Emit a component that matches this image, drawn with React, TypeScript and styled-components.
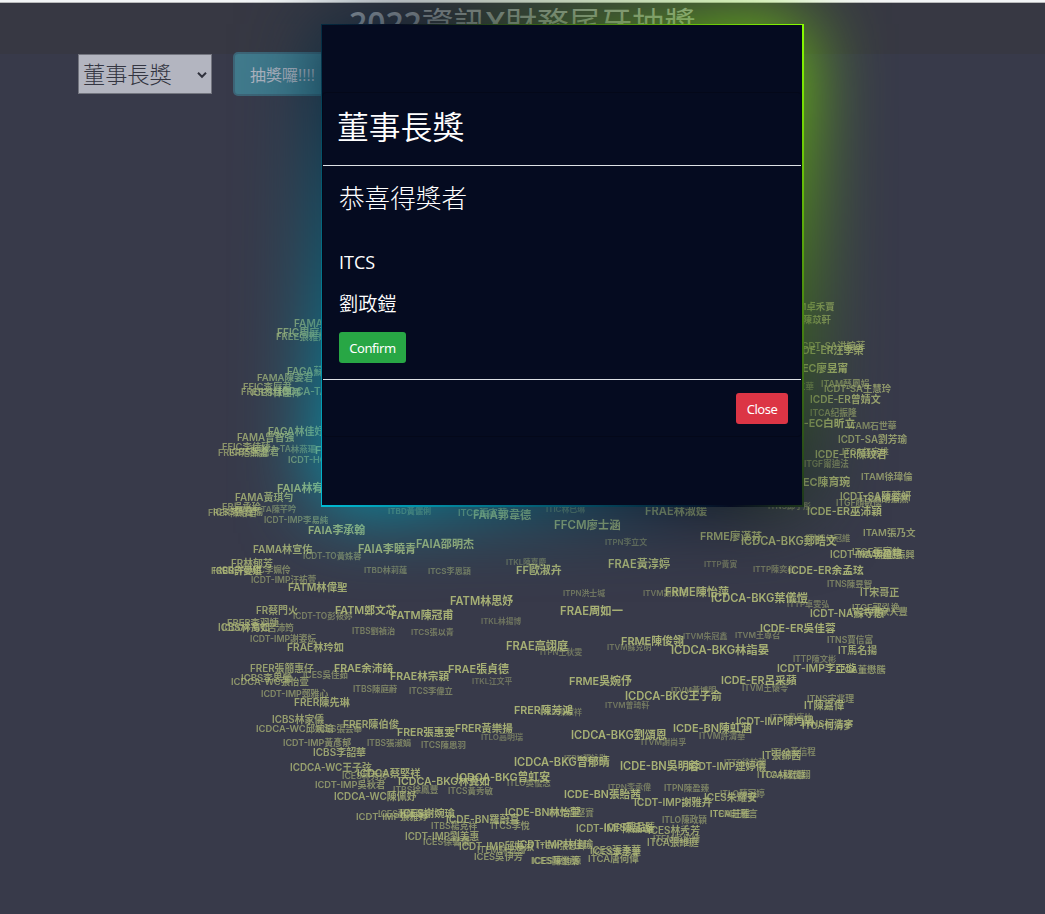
import React from "react";
import styled, { createGlobalStyle } from "styled-components";

const Global = createGlobalStyle`
  * { box-sizing: border-box; }
  body {
    margin: 0;
    background: #383a4a;
    font-family: "Open Sans", "Noto Sans CJK TC", sans-serif;
    overflow: hidden;
  }
`;

const Page = styled.div`
  position: relative;
  width: 100%;
  height: 914px;
  overflow: hidden;
  background: #383a4a;
`;

const TopEdge = styled.div`
  height: 3px;
  background: #f3f5f6;
  border-bottom: 1px solid #b9babb;
`;

const Header = styled.header`
  height: 51px;
  background: #373843;
  display: flex;
  justify-content: center;
`;

const Title = styled.h1`
  margin: 0;
  padding-top: 1px;
  height: 38px;
  line-height: 38px;
  font-size: 31.8px;
  font-weight: 600;
  color: #a0a3aa;
  white-space: nowrap;
`;

const Han = styled.span`
  font-weight: 400;
`;

const Toolbar = styled.div`
  display: flex;
  align-items: flex-start;
  gap: 21px;
  padding-left: 78px;
  height: 42px;
`;

const Select = styled.div`
  display: flex;
  align-items: center;
  justify-content: space-between;
  width: 134px;
  height: 40px;
  padding: 1px 4px 0 4px;
  border: 1px solid #73757f;
  background: #b3b5c0;
  color: #343642;
  font-size: 22.2px;
  font-weight: 300;
  line-height: 38px;
  white-space: nowrap;
`;

const DrawButton = styled.button`
  width: 130px;
  height: 44px;
  margin-top: -2px;
  padding: 0 0 0 15px;
  border: 2px solid #3d6577;
  border-radius: 5px;
  background: #417a8c;
  color: #b0b5c1;
  font: 400 16px "Open Sans", "Noto Sans CJK TC", sans-serif;
  text-align: left;
  white-space: nowrap;
`;

const Cloud = styled.div`
  position: absolute;
  inset: 0;
  font-family: Inter, "Noto Sans CJK TC", sans-serif;
  font-weight: 600;
  color: #b6c07a;
`;

const Tag = styled.span<{ $x: number; $y: number; $size: number; $alpha: number }>`
  position: absolute;
  left: ${(p) => p.$x}px;
  top: ${(p) => p.$y - 8}px;
  font-size: ${(p) => p.$size}px;
  opacity: ${(p) => p.$alpha};
  line-height: 16px;
  white-space: nowrap;
`;

const Modal = styled.div`
  position: absolute;
  left: 322px;
  top: 25px;
  width: 480px;
  height: 480px;
`;

const Glow = styled.div<{ $blur?: boolean }>`
  position: absolute;
  inset: -1px -2px -2px -1px;
  background: linear-gradient(235deg, #89ff00, #060c21, #00bcd4);
  filter: ${(p) => (p.$blur ? "blur(40px)" : "none")};
`;

const ModalFace = styled.div`
  position: relative;
  height: 100%;
  background: #050b20;
  color: #fff;
  display: flex;
  flex-direction: column;
  justify-content: center;
`;

const ModalContent = styled.section`
  height: 345px;
  margin-bottom: 1px;
  border: 1px solid #040819;
  border-radius: 4px;
  display: flex;
  flex-direction: column;
`;

const ModalHeader = styled.div`
  height: 73px;
  padding: 10px 14px 8px;
  border-bottom: 1px solid #dee2e6;
  font-size: 31.8px;
  font-weight: 350;
  line-height: 48px;
`;

const ModalBody = styled.div`
  height: 213px;
  padding: 13px 16px 0;
  display: flex;
  flex-direction: column;
  align-items: flex-start;
`;

const Congrats = styled.div`
  font-size: 25.6px;
  font-weight: 300;
  line-height: 40px;
`;

const Winner = styled.div<{ $gap: number }>`
  margin-top: ${(p) => p.$gap}px;
  font-size: 19.2px;
  font-weight: 350;
  line-height: 28px;
`;

const Dept = styled(Winner)`
  font-size: 18px;
  font-weight: 400;
`;

const Button = styled.button<{ $tone: string; $width: number }>`
  width: ${(p) => p.$width}px;
  height: 31px;
  padding: 1px 0 0;
  border: 0;
  border-radius: 3px;
  background: ${(p) => p.$tone};
  color: #fff;
  font: 400 13px "Noto Sans", sans-serif;
  letter-spacing: -0.45px;
`;

const ModalFooter = styled.div`
  flex: 1;
  border-top: 1px solid #dee2e6;
  padding: 13px 13px 0;
  display: flex;
  justify-content: flex-end;
  align-items: flex-start;
`;

const ConfirmSlot = styled.div`
  margin-top: 14px;
  height: 31px;
  display: flex;
`;

// Each line: left edge, right edge, vertical centre, label.
const NAMES = `
783 835 307 ITAM卓禾賈
765 831 320 ICDE-ER陳苡軒
294 354 323 FAMA曾怡蓉
277 330 332 FFIC周庭蔚
276 328 337 FREE張雅婷
799 866 346 ICDT-SA洪婉菲
792 864 350 ICDE-ER汪季榮
764 849 369 ICDCA-EC廖昱甯
287 345 371 FAGA蘇怡君
257 314 378 FAMA陳姿君
243 292 387 FFIC李庭君
241 292 392 FRER林佳潔
251 301 393 ICES林佳樺
279 349 391 ICDCA-TA林佳
770 814 386 ITGF王立華
821 870 384 ITAM蔡鳳娟
824 892 389 ICDT-SA王慧玲
810 881 399 ICDE-ER曾婧文
810 857 413 ITCA纪振隆
770 856 424 ICDCA-EC白昕立
848 897 426 ITAM石世華
268 326 431 FAGA林佳妤
237 295 438 FAMA曾智強
838 908 440 ICDT-SA劉芳瑜
222 271 447 FFIC李佳臻
250 318 449 ICDCA-TA林燕珊
315 373 450 FAIA林美君
218 268 453 FRER范燕誼
229 279 452 ICBS張嘉君
842 889 452 ITCA伍家維
815 887 454 ICDE-ER陳玟君
288 346 460 ICDT-HQ王文
804 849 464 ITGF甯迪法
861 913 477 ITAM徐瑋倫
764 851 482 ICDCA-EC陳育琬
277 335 488 FAIA林宥辰
235 294 497 FAMA黃琪勻
840 912 496 ICDT-SA陳蓉妍
860 909 499 ITCA胡振然
836 882 503 ITGF顏敏儒
768 811 506 ITNS邱子彤
222 261 507 FR吳承玲
208 257 513 FRER陳怡君
213 263 512 ICBS張嘉瑜
232 298 509 ICDCA-TA陳芊吟
264 329 520 ICDT-IMP李易純
388 431 511 ITBD黃儷俐
458 507 513 ITCS張家華
473 532 515 FAIA郭韋德
546 585 509 ITIC林已琳
645 707 511 FRAE林淑媛
807 882 512 ICDE-ER巫沛穎
554 621 525 FFCM廖士涵
308 366 530 FAIA李承翰
863 916 533 ITAM張乃文
700 762 537 FRME廖漢芬
806 850 538 ITNS何冠維
741 838 541 ICDCA-BKG鄭晧文
605 647 542 ITPN李立文
416 475 544 FAIA邵明杰
253 313 549 FAMA林宣佑
358 417 549 FAIA李曉青
303 363 556 ICDT-TO黃姝蓉
830 903 554 ICDT-NA李盈慧
852 902 552 ITGF張富鈞
855 915 555 ITCA張簡振興
506 546 562 ITKL陳嘉慶
231 273 563 FR林郁芳
608 670 564 FRAE黃淳婷
704 737 564 ITTP黃寅
753 795 569 ITTP陳奕心
516 562 570 FF歐淑卉
211 262 571 FRER許愛媛
213 262 571 ICBS許雯琪
219 292 570 ICDCA-WC李姵伶
364 407 570 ITBD林莉蓮
428 471 571 ITCS李思穎
788 864 571 ICDE-ER余孟玹
251 317 580 ICDT-IMP汪祐萱
827 872 584 ITNS陳昱智
288 349 588 FATM林偉聖
665 729 592 FRME陳怡萍
563 605 593 ITPN洪士堿
643 687 593 ITVM謝效昭
860 899 592 IT宋哥正
711 809 598 ICDCA-BKG葉儀愷
450 515 601 FATM林思妤
787 829 604 ITTP卓雯弘
256 298 610 FR蔡門火
335 398 611 FATM鄭文芯
560 623 611 FRAE周如一
852 900 608 ITGF郭泓逸
810 885 613 ICDT-NA蘇守愚
849 908 612 ITCA廖家人豐
391 455 615 FATM陳冠甫
293 354 616 ICDT-TO彭筱婷
481 521 621 ITKL林揚博
227 279 623 FRER李羽婕
218 270 628 ICBS林育如
222 295 628 ICDCA-WC呂沛筠
760 836 629 ICDE-ER吳佳蓉
352 395 631 ITBS劉禎治
411 454 632 ITCS張以青
735 780 635 ITVM王尊召
683 727 636 ITVM朱冠鑫
250 317 639 ICDT-IMP謝姿妘
621 684 641 FRME陳俊翎
827 873 640 ITNS賈信富
287 344 647 FRAE林玲如
506 568 646 FRAE高翊庭
607 651 647 ITVM蘇克明
671 770 650 ICDCA-BKG林詣晏
838 877 650 IT馬名揚
540 582 652 ITPN王秋雯
793 836 659 ITTP陳文彬
250 314 668 FRER張簡惠仔
334 393 669 FRAE余沛錡
448 509 669 FRAE張貞德
777 857 669 ICDT-IMP李亞璇
836 886 670 ITCA董懋騰
303 348 675 ICES吳佳茹
241 292 678 ICBS李思瑩
390 449 677 FRAE林宗穎
231 310 682 ICDCA-WC張怡萱
472 512 681 ITKL江文平
569 632 681 FRME吳婉伃
721 797 681 ICDE-ER呂采蘋
742 788 688 ITVM王懷苓
671 716 690 ITVM黃博明
353 397 689 ITBS陳庭蔚
409 453 691 ITCS李偉立
261 329 694 ICDT-IMP鄭雅心
625 723 696 ICDCA-BKG王子俞
807 854 699 ITNS宋兆理
294 350 702 FRER陳先琳
605 649 705 ITVM曾琦軒
804 844 705 IT陳嘉偉
514 573 711 FRER陳芳鴻
540 582 712 ITLO陳家祥
272 324 720 ICBS林家儀
770 812 717 ITTP韋唐竹
736 815 721 ICDT-IMP陳均陽
343 399 724 FRER陳伯俊
802 853 724 ITNS柯浩宇
802 853 726 ITCA何清夢
256 335 729 ICDCA-WC邱婉瑜
317 362 729 ICES張芸華
455 513 729 FRER黃樂揚
673 752 728 ICDE-BN陳虹涵
397 455 733 FRER張惠雯
481 523 737 ITLO高明瑞
571 668 735 ICDCA-BKG劉頌恩
699 745 736 ITVM許清華
283 352 743 ICDT-IMP黃彥郁
367 411 743 ITBS張淑娟
421 466 745 ITCS陳思羽
641 686 742 ITVM謝尚孚
313 366 752 ICBS李韶華
762 801 755 IT張錦茜
771 816 752 ITLO黃信程
564 607 758 ITPN張詠勛
514 611 762 ICDCA-BKG曾郁晴
724 766 762 ITTP徐柏翰
620 700 766 ICDE-BN吳明蓉
688 767 766 ICDT-IMP連婷儀
290 373 767 ICDCA-WC王子弦
357 421 773 ICDCA蔡堅祥
342 388 776 ICES林秀婷
757 806 775 ITCA林宏儒
762 811 775 ITCA蘇俊翔
456 551 778 ICDCA-BKG曾虹安
398 491 782 ICDCA-BKG林冀如
507 551 783 ITLO吳俊志
315 386 785 ICDT-IMP吳秋君
608 651 787 ITPN李承偉
393 438 790 ITBS徐鳳豐
664 709 788 ITPN陳盈臻
448 493 791 ITCS黃秀敏
564 641 795 ICDE-BN張貽茜
720 765 794 ITLO陳冠婷
334 418 796 ICDCA-WC陳佩妤
704 757 797 ICES朱耀安
634 713 802 ICDT-IMP謝雅卉
378 424 814 ICES蔡佩珊
400 455 814 ICES謝婉瑜
356 429 817 ICDT-IMP張雅婷
505 581 813 ICDE-BN林怡萱
549 594 813 ITLO郭堅實
710 758 814 ITCA莊雁言
710 750 814 ITEM莊雅
446 520 819 ICDE-BN羅蔚喜
662 707 820 ITLO陳政穎
431 477 826 ITBS楊克祥
491 530 826 ITCS李悅
576 653 828 ICDT-IMP陳品璇
604 655 828 ICES陳品臻
648 700 830 ICES林秀芳
405 480 837 ICDT-IMP劉美惠
423 470 842 ICES徐馨儀
653 700 839 ITEM吳培綺
647 699 843 ITCA張維庭
517 594 844 ICDT-IMP林佳瑜
459 535 846 ICDT-IMP邱婷淑
537 586 846 ITEM張恩輝
477 525 850 ITEM林志翰
590 641 851 ICES張季華
592 641 852 ICES李彥葦
474 523 857 ICES吳伊芳
588 639 859 ITCA唐何偉
531 579 861 ICES陳怡蓁
532 581 861 ICES陳鈞源
`;

// Approximate advance widths in em; ideographs count as one em.
const ADVANCE: Record<string, number> = {
  I: 0.28, T: 0.65, P: 0.65, N: 0.77, C: 0.75, D: 0.74, A: 0.72, "-": 0.47,
  B: 0.66, K: 0.69, G: 0.76, F: 0.61, R: 0.66, M: 0.92, E: 0.61, V: 0.72,
  S: 0.65, L: 0.57, O: 0.78, W: 1.03, H: 0.76, Q: 0.78,
};

const tags = NAMES.trim().split("\n").map((line) => {
  const [left, right, y, label] = line.split(" ");
  const ems = [...label].reduce((sum, ch) => sum + (ADVANCE[ch] ?? 1), 0);
  const size = (Number(right) - Number(left)) / ems;
  const alpha = Math.max(0.42, Math.min(0.88, 0.42 + (size - 7.7) * 0.16));
  return { label, x: Number(left), y: Number(y), size: size * 1.006, alpha };
});

export default function App() {
  return (
    <>
      <Global />
      <Page>
        <TopEdge />
        <Header>
          <Title>
            2022<Han>資訊</Han>X<Han>財務尾牙抽獎</Han>
          </Title>
        </Header>
        <Toolbar>
          <Select>
            董事長獎
            <svg width="10" height="8" viewBox="0 0 10 8" fill="none">
              <path d="M1 1.8 5 5.8 9 1.8" stroke="#30323d" strokeWidth="2" />
            </svg>
          </Select>
          <DrawButton>抽獎囉!!!!</DrawButton>
        </Toolbar>
        <Cloud>
          {tags.map((t, i) => (
            <Tag key={i} $x={t.x} $y={t.y} $size={t.size} $alpha={t.alpha}>
              {t.label}
            </Tag>
          ))}
        </Cloud>
        <Modal>
          <Glow $blur />
          <Glow />
          <ModalFace>
            <ModalContent>
              <ModalHeader>董事長獎</ModalHeader>
              <ModalBody>
                <Congrats>恭喜得獎者</Congrats>
                <Dept $gap={29}>ITCS</Dept>
                <Winner $gap={14}>劉政鎧</Winner>
                <ConfirmSlot>
                  <Button $tone="#28a745" $width={67}>Confirm</Button>
                </ConfirmSlot>
              </ModalBody>
              <ModalFooter>
                <Button $tone="#dc3545" $width={52}>Close</Button>
              </ModalFooter>
            </ModalContent>
          </ModalFace>
        </Modal>
      </Page>
    </>
  );
}
